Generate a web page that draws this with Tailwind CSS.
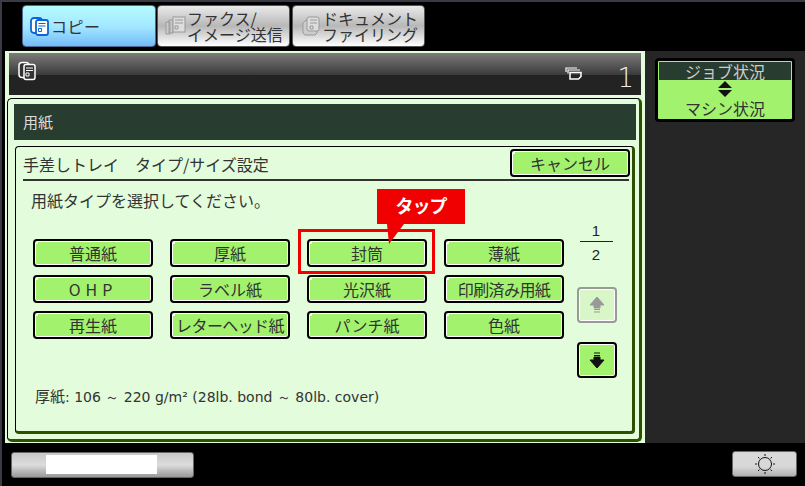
<!DOCTYPE html>
<html lang="ja">
<head>
  <meta charset="UTF-8" />
  <title>用紙</title>
  <script src="https://cdn.jsdelivr.net/npm/@tailwindcss/browser@4"></script>
</head>
<body class="bg-black overflow-hidden">
<div class="relative w-[805px] h-[486px] bg-black border-t-2 border-l-2 border-[#3a3a44] flex flex-col font-['Noto_Sans_CJK_JP',sans-serif] text-[#333]">

  <!-- tabs -->
  <div class="h-[49px] shrink-0 pl-[20px] pt-[3px] flex gap-px items-start">
    <div class="w-[134px] h-[42px] rounded-[4px] border border-[#4a6a90] bg-gradient-to-b from-[#b4fbff] via-[#a4e8ff] to-[#74bcfa] flex items-center pl-[7px] text-[16px]">
      <svg width="19" height="20" viewBox="0 0 19 20"><rect x="1" y="2" width="11" height="15" rx="3" fill="#fff" stroke="#0a66d8" stroke-width="1.800"/><rect x="6" y="4" width="12" height="15" rx="2" fill="#fff" stroke="#0a66d8" stroke-width="1.800"/><path d="M8.500 7.500h7M8.500 10h7M8.500 12.500h3v3h-3z" fill="none" stroke="#0a66d8"/></svg>
      <span class="ml-[2px] tracking-[0.5px]">コピー</span>
    </div>
    <div class="w-[133px] h-[42px] rounded-[4px] border border-[#555] bg-gradient-to-b from-[#eaeaea] via-[#b8b8b8] to-white flex items-center pl-[7px] gap-[1px]">
      <svg width="21" height="22" viewBox="0 0 21 22"><path d="M1 7h4v12H1zM4 5h4v13H4z" fill="#ccc" stroke="#999"/><rect x="8" y="2" width="12" height="15" fill="#ddd" stroke="#999"/><path d="M10 5h8M10 8h8M10 11h3v3h-3z" fill="none" stroke="#999"/></svg>
      <span class="text-[16px] leading-[16px] whitespace-nowrap">ファクス/<br>イメージ送信</span>
    </div>
    <div class="w-[133px] h-[42px] ml-[1px] rounded-[4px] border border-[#555] bg-gradient-to-b from-[#eaeaea] via-[#b8b8b8] to-white flex items-center pl-[8px] gap-[1px]">
      <svg width="20" height="22" viewBox="0 0 20 22"><path d="M2 8l3-3h11v13l-2 2H4l-2-2z" fill="#ccc" stroke="#999"/><rect x="6" y="2" width="12" height="14" rx="2" fill="#ddd" stroke="#999"/><path d="M9 5h7M9 8h7M9 11h3v3H9z" fill="none" stroke="#999"/></svg>
      <span class="text-[16px] leading-[16px] whitespace-nowrap">ドキュメント<br>ファイリング</span>
    </div>
  </div>

  <!-- middle -->
  <div class="h-[392px] shrink-0 flex">
    <div class="w-[640px] shrink-0 ml-[3px] bg-[#e2fcdc] pt-[2px] px-[4px] flex flex-col">
      <div class="w-[632px] h-[42px] shrink-0 bg-[linear-gradient(to_bottom,#7c7c7c_0%,#3a3a3a_52%,#232323_52%,#232323_100%)] flex items-center pl-[9px] pr-[7px] text-white">
        <svg width="18" height="20" viewBox="0 0 18 20" class="-mt-[6px]"><rect x="1" y="1.500" width="10" height="15" rx="3" fill="#333" stroke="#fff" stroke-width="1.500"/><rect x="6" y="3.500" width="11" height="15" rx="2" fill="#333" stroke="#fff" stroke-width="1.500"/><path d="M8 7h7M8 9.500h7M8 12h3v3H8z" fill="none" stroke="#fff"/></svg>
        <svg width="17" height="13" viewBox="0 0 17 13" class="ml-auto -mt-[2px]"><path d="M1 5V1h11M3 6.500V3h12" fill="none" stroke="#fff" stroke-width="1.200"/><path d="M5 5.500h11v4l-2.500 2.500H5z" fill="none" stroke="#fff" stroke-width="1.500"/></svg>
        <span class="ml-[35px] text-[26px] leading-none mt-[8px] font-['DejaVu_Sans'] font-extralight text-[#eee]">1</span>
      </div>

      <div class="mt-[3px] -ml-[2px] w-[635px] h-[344px] shrink-0 rounded-[5px] border border-black border-r-[3px] border-b-[3px] border-r-[#2c5000] border-b-[#2c5000] pt-[5px] pl-[6px]">
        <div class="h-[36px] w-[622px] bg-[#283c30] text-[#ddd] text-[15px] leading-[36px] pl-[9px]">用紙</div>
        <div class="mt-[6px] w-[620px] ml-[1px] h-[288px] rounded-[4px] border border-black border-r-[3px] border-b-[3px] border-r-[#2c5000] border-b-[#2c5000] pl-[7px] pr-[3px]">
          <div class="h-[34px] border-b-2 border-[#333] flex items-center justify-between text-[16px]">
            <span class="leading-[20px] mt-[2px]">手差しトレイ　タイプ/サイズ設定</span>
            <button class="w-[120px] h-[28px] -mr-[1px] rounded-[4px] border-2 border-black shadow-[inset_0_0_0_1px_#fff] bg-[#a2f26e] bg-[radial-gradient(circle_at_1px_1px,#fff_2px,transparent_2.500px)] text-[16px] leading-[20px]">キャンセル</button>
          </div>
          <p class="mt-[9px] ml-[8px] text-[16px] leading-[20px]">用紙タイプを選択してください。</p>

          <div class="mt-[29px] flex items-start">
            <div class="ml-[10px] w-[531px] shrink-0 grid grid-cols-4 gap-x-[17px] gap-y-[8px] text-[16px] leading-[20px]">
              <button class="h-[28px] rounded-[4px] border-2 border-black shadow-[inset_0_0_0_1px_#fff] bg-[#a2f26e] bg-[radial-gradient(circle_at_1px_1px,#fff_2px,transparent_2.500px)]">普通紙</button>
              <button class="h-[28px] rounded-[4px] border-2 border-black shadow-[inset_0_0_0_1px_#fff] bg-[#a2f26e] bg-[radial-gradient(circle_at_1px_1px,#fff_2px,transparent_2.500px)]">厚紙</button>
              <button class="h-[28px] rounded-[4px] border-2 border-black shadow-[inset_0_0_0_1px_#fff] bg-[#a2f26e] bg-[radial-gradient(circle_at_1px_1px,#fff_2px,transparent_2.500px)]">封筒</button>
              <button class="h-[28px] rounded-[4px] border-2 border-black shadow-[inset_0_0_0_1px_#fff] bg-[#a2f26e] bg-[radial-gradient(circle_at_1px_1px,#fff_2px,transparent_2.500px)]">薄紙</button>
              <button class="h-[28px] rounded-[4px] border-2 border-black shadow-[inset_0_0_0_1px_#fff] bg-[#a2f26e] bg-[radial-gradient(circle_at_1px_1px,#fff_2px,transparent_2.500px)] tracking-[5px]">OHP</button>
              <button class="h-[28px] rounded-[4px] border-2 border-black shadow-[inset_0_0_0_1px_#fff] bg-[#a2f26e] bg-[radial-gradient(circle_at_1px_1px,#fff_2px,transparent_2.500px)]">ラベル紙</button>
              <button class="h-[28px] rounded-[4px] border-2 border-black shadow-[inset_0_0_0_1px_#fff] bg-[#a2f26e] bg-[radial-gradient(circle_at_1px_1px,#fff_2px,transparent_2.500px)]">光沢紙</button>
              <button class="h-[28px] rounded-[4px] border-2 border-black shadow-[inset_0_0_0_1px_#fff] bg-[#a2f26e] bg-[radial-gradient(circle_at_1px_1px,#fff_2px,transparent_2.500px)] whitespace-nowrap tracking-[-0.6px]">印刷済み用紙</button>
              <button class="h-[28px] rounded-[4px] border-2 border-black shadow-[inset_0_0_0_1px_#fff] bg-[#a2f26e] bg-[radial-gradient(circle_at_1px_1px,#fff_2px,transparent_2.500px)]">再生紙</button>
              <button class="h-[28px] rounded-[4px] border-2 border-black shadow-[inset_0_0_0_1px_#fff] bg-[#a2f26e] bg-[radial-gradient(circle_at_1px_1px,#fff_2px,transparent_2.500px)] whitespace-nowrap tracking-[-0.6px] overflow-hidden">レターヘッド紙</button>
              <button class="h-[28px] rounded-[4px] border-2 border-black shadow-[inset_0_0_0_1px_#fff] bg-[#a2f26e] bg-[radial-gradient(circle_at_1px_1px,#fff_2px,transparent_2.500px)]">パンチ紙</button>
              <button class="h-[28px] rounded-[4px] border-2 border-black shadow-[inset_0_0_0_1px_#fff] bg-[#a2f26e] bg-[radial-gradient(circle_at_1px_1px,#fff_2px,transparent_2.500px)]">色紙</button>
            </div>
            <div class="ml-[13px] w-[40px] shrink-0 flex flex-col items-center -mt-[19px]">
              <div class="w-[33px] -ml-[2px] text-center text-[15px] leading-[22px] text-[#222] font-['Liberation_Sans']">
                <div class="border-b border-[#222] h-[22px]">1</div>
                <div class="h-[24px] leading-[26px]">2</div>
              </div>
              <button class="mt-[21px] w-[40px] h-[36px] rounded-[4px] border-2 border-[#999] bg-[#d8f6c8] shadow-[inset_0_0_0_1px_#fff] flex items-center justify-center">
                <svg width="16" height="18" viewBox="0 0 16 18"><path d="M8 1l7 8h-4v3H5V9H1zM5 13.500h6M5 16h6" fill="#999" stroke="#999" stroke-width="1"/></svg>
              </button>
              <button class="mt-[19px] w-[40px] h-[36px] rounded-[4px] border-2 border-black bg-[#a2f26e] shadow-[inset_0_0_0_1px_#fff] flex items-center justify-center">
                <svg width="16" height="18" viewBox="0 0 16 18"><path d="M5 2h6M5 4.500h6M5 6h6v3h4l-7 8-7-8h4z" fill="#111" stroke="#111" stroke-width="1"/></svg>
              </button>
            </div>
          </div>
          <p class="mt-[8px] ml-[12px] text-[14px] leading-[20px] font-['DejaVu_Sans',sans-serif] whitespace-pre"><span class="font-['Noto_Sans_CJK_JP'] text-[15px]">厚紙</span>: 106 ～ 220 g/m² (28lb. bond ～ 80lb. cover)</p>
        </div>
      </div>
    </div>

    <!-- right column -->
    <div class="flex-1 bg-[#262626] pt-[7px] pl-[10px]">
      <div class="w-[140px] h-[64px] rounded-[4px] border-[3px] border-black bg-[#a2f26e] text-[16px] text-center overflow-hidden">
        <div class="h-[18px] mt-[1px] mx-[1px] bg-[#283c30] text-[#ccc] leading-[18px]">ジョブ状況</div>
        <svg width="16" height="19" viewBox="0 0 16 19" class="mx-auto"><path d="M8 1l7 7H1zM1 10h14l-7 7z" fill="#111"/></svg>
        <div class="leading-[18px]">マシン状況</div>
      </div>
    </div>
  </div>

  <!-- bottom -->
  <div class="flex-1 flex items-start justify-between pl-[9px] pr-[6px] pt-[9px]">
    <div class="w-[183px] h-[26px] rounded-[3px] border border-[#666] bg-gradient-to-b from-[#c8c8c8] via-[#dcdcdc] to-[#999] flex justify-center pt-[2px] pr-[3px]">
      <div class="w-[111px] h-[19px] bg-white"></div>
    </div>
    <div class="w-[65px] h-[26px] -mt-[1px] mr-[2px] rounded-[3px] border border-[#666] bg-[linear-gradient(to_bottom,#d8d8d8_0%,#d8d8d8_60%,#b0b0b0_100%)] flex items-center justify-center">
      <svg width="22" height="22" viewBox="0 0 22 22"><circle cx="11" cy="11" r="6.500" fill="none" stroke="#111"/><path d="M11 1v2M11 19v2M1 11h2M19 11h2M4 4l1.500 1.500M16.500 16.500L18 18M4 18l1.500-1.500M16.500 5.500L18 4" stroke="#111"/></svg>
    </div>
  </div>

  <!-- tap callout over the button grid -->
  <div class="absolute left-[296px] top-[227px] w-[137px] h-[45px] border-[3px] border-[#f00000]"></div>
  <div class="absolute left-[375px] top-[187px] w-[88px] h-[35px] bg-[#f00000] text-white font-bold text-[18px] leading-[33px] text-center tracking-[-1px]">タップ</div>
  <svg class="absolute left-[385px] top-[222px]" width="17" height="20" viewBox="0 0 17 20"><path d="M0 0h17L2 20z" fill="#f00000"/></svg>
</div>
</body>
</html>
